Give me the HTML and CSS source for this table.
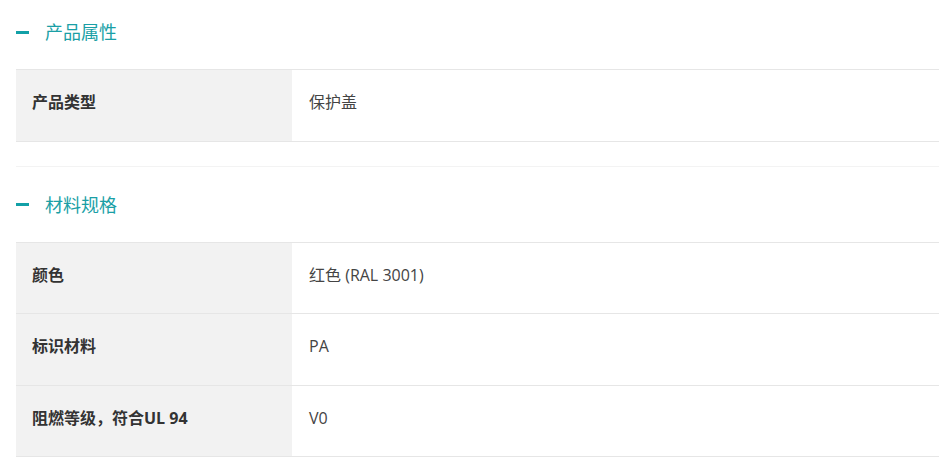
FILE: index.html
```html
<!DOCTYPE html>
<html lang="zh-CN">
<head>
<meta charset="utf-8">
<title>产品属性</title>
<link rel="stylesheet" href="styles.css">
</head>
<body>
<div class="page">
  <section class="group">
    <h2 class="group-title"><span class="dash"></span>产品属性</h2>
    <table class="spec">
      <tr><th>产品类型</th><td>保护盖</td></tr>
    </table>
  </section>
  <section class="group group-next">
    <h2 class="group-title"><span class="dash"></span>材料规格</h2>
    <table class="spec">
      <tr><th>颜色</th><td>红色 (RAL 3001)</td></tr>
      <tr><th>标识材料</th><td>PA</td></tr>
      <tr><th>阻燃等级，符合UL 94</th><td>V0</td></tr>
    </table>
  </section>
</div>
</body>
</html>
```

FILE: styles.css
```css
* { box-sizing: border-box; }
html, body { margin: 0; padding: 0; background: #fff; }
body {
  font-family: "Open Sans", "Noto Sans CJK SC", sans-serif;
  color: #333;
}
.page {
  padding: 0 11px 0 16px;
}
.group {
  padding-top: 20px;
  padding-bottom: 24px;
}
.group-next {
  border-top: 1px solid #f3f3f3;
  padding-top: 26px;
}
.group-title {
  display: flex;
  align-items: center;
  margin: 0 0 25px 0;
  height: 24px;
  font-size: 18px;
  font-weight: 400;
  color: #1a9fa6;
  line-height: 24px;
}
.dash {
  display: inline-block;
  width: 13px;
  height: 3px;
  background: #12a0a7;
  margin-right: 16px;
}
.spec {
  width: 100%;
  border-collapse: collapse;
  font-size: 16px;
}
.spec tr {
  border-top: 1px solid #e6e6e6;
  border-bottom: 1px solid #e6e6e6;
}
.spec th, .spec td {
  text-align: left;
  vertical-align: top;
  line-height: 21px;
  padding: 22px 16px 27.5px 16px;
}
.spec th {
  width: 276px;
  background: #f2f2f2;
  font-weight: 700;
  color: #333;
}
.spec td {
  padding-left: 17px;
  color: #444;
}
```
